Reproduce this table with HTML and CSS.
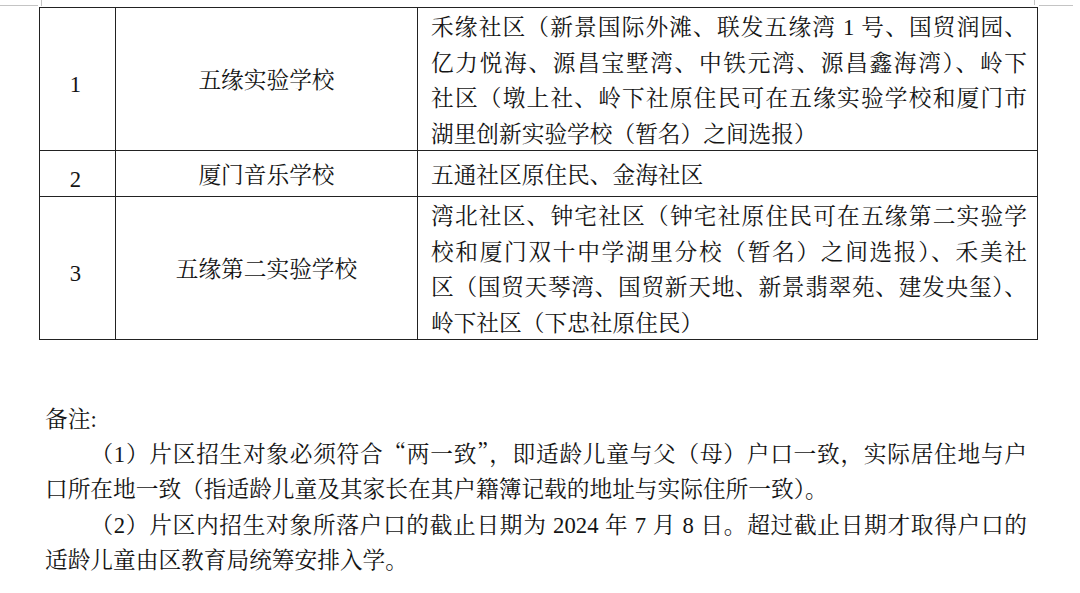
FILE: index.html
```html
<!DOCTYPE html>
<html lang="zh-CN">
<head>
<meta charset="utf-8">
<title>片区划分</title>
<link rel="stylesheet" href="styles.css">
</head>
<body>
<div class="page">
  <span class="mark mark-tl-h"></span>
  <span class="mark mark-tl-v"></span>
  <span class="mark mark-tr-v"></span>
  <span class="mark mark-tr-h"></span>

  <table class="zones">
    <colgroup>
      <col class="c-no">
      <col class="c-school">
      <col class="c-area">
    </colgroup>
    <tr class="row-tall">
      <td class="no"><span class="num idx">1</span></td>
      <td class="school">五缘实验学校</td>
      <td class="area">
        <span class="ln">禾缘社区（新景国际外滩、联发五缘湾 <span class="num">1</span> 号、国贸润园、</span>
        <span class="ln">亿力悦海、源昌宝墅湾、中铁元湾、源昌鑫海湾）、岭下</span>
        <span class="ln">社区（墩上社、岭下社原住民可在五缘实验学校和厦门市</span>
        <span class="ln last">湖里创新实验学校（暂名）之间选报）</span>
      </td>
    </tr>
    <tr class="row-short">
      <td class="no"><span class="num idx">2</span></td>
      <td class="school">厦门音乐学校</td>
      <td class="area"><span class="ln last">五通社区原住民、金海社区</span></td>
    </tr>
    <tr class="row-tall">
      <td class="no"><span class="num idx">3</span></td>
      <td class="school">五缘第二实验学校</td>
      <td class="area">
        <span class="ln">湾北社区、钟宅社区（钟宅社原住民可在五缘第二实验学</span>
        <span class="ln">校和厦门双十中学湖里分校（暂名）之间选报）、禾美社</span>
        <span class="ln">区（国贸天琴湾、国贸新天地、新景翡翠苑、建发央玺）、</span>
        <span class="ln last">岭下社区（下忠社原住民）</span>
      </td>
    </tr>
  </table>

  <div class="notes">
    <p class="ln last">备注<span class="num">:</span></p>
    <p class="note">
      <span class="ln first">（<span class="num">1</span>）片区招生对象必须符合“两一致”，即适龄儿童与父（母）户口一致，实际居住地与户</span>
      <span class="ln last">口所在地一致（指适龄儿童及其家长在其户籍簿记载的地址与实际住所一致）。</span>
    </p>
    <p class="note">
      <span class="ln first">（<span class="num">2</span>）片区内招生对象所落户口的截止日期为 <span class="num">2024</span> 年 <span class="num">7</span> 月 <span class="num">8</span> 日。超过截止日期才取得户口的</span>
      <span class="ln last">适龄儿童由区教育局统筹安排入学。</span>
    </p>
  </div>
</div>
</body>
</html>
```

FILE: styles.css
```css
html, body {
  margin: 0;
  padding: 0;
  background: #ffffff;
}

.page {
  position: relative;
  width: 1080px;
  height: 593px;
  overflow: hidden;
  padding: 7px 0 0 39px;
  box-sizing: border-box;
  font-family: "Noto Serif CJK SC", "Source Han Serif SC", "Noto Sans CJK SC", serif;
  font-size: 22.7px;
  color: #141414;
}

.num {
  font-family: "Liberation Serif", "Times New Roman", serif;
  line-height: 1;
}

.idx {
  vertical-align: -4px;
}

/* page corner crop marks */
.mark {
  position: absolute;
  background: #c4c4c4;
}
.mark-tl-h { left: 0; top: 5px; width: 38px; height: 1px; }
.mark-tl-v { left: 41px; top: 0; width: 1px; height: 6px; }
.mark-tr-v { left: 1034px; top: 0; width: 1px; height: 5px; }
.mark-tr-h { left: 1039px; top: 5px; width: 34px; height: 1px; }

/* table */
.zones {
  border-collapse: collapse;
  table-layout: fixed;
  width: 998px;
}
.c-no { width: 76px; }
.c-school { width: 302px; }
.c-area { width: 620px; }

.zones td {
  border: 1.5px solid #222222;
  padding: 0;
  vertical-align: middle;
  line-height: 35.5px;
}

.row-tall td { height: 142px; }
.row-short td { height: 45px; }

.zones .no {
  text-align: center;
  padding-right: 4px;
}

.zones .school {
  text-align: center;
}

.zones .area {
  padding: 0 10px 0 13px;
}

.ln {
  display: block;
  height: 35.5px;
  line-height: 35.5px;
  text-align: justify;
  text-align-last: justify;
}
.ln.last {
  text-align-last: left;
}

/* notes */
.notes {
  margin-top: 60px;
  padding-left: 6px;
  width: 982px;
}

.notes p {
  margin: 0;
}

.notes .ln {
  height: 35.2px;
  line-height: 35.2px;
}

.note .first {
  text-indent: 2em;
}
```
